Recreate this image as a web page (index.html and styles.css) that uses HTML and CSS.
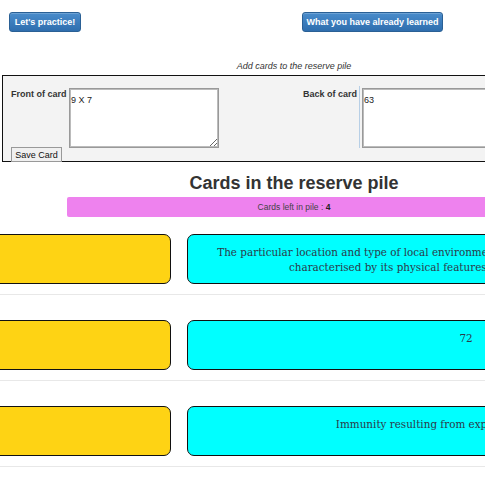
FILE: index.html
```html
<!DOCTYPE html>
<html>
<head>
<meta charset="utf-8">
<link rel="stylesheet" href="styles.css">
</head>
<body>
<div class="page">
  <div class="topbar">
    <button class="btn btn-practice">Let's practice!</button>
    <button class="btn btn-learned">What you have already learned</button>
  </div>
  <div class="caption">Add cards to the reserve pile</div>
  <div class="addform">
    <div class="fields">
      <label class="lbl lbl-front">Front of card</label>
      <textarea class="ta ta-front">9 X 7</textarea>
      <label class="lbl lbl-back">Back of card</label>
      <div class="backwrap"><textarea class="ta ta-back">63</textarea></div>
    </div>
    <button class="save">Save Card</button>
  </div>
  <h2 class="title">Cards in the reserve pile</h2>
  <div class="count">Cards left in pile : <b>4</b></div>
  <div class="rows">
    <div class="row">
      <div class="card front"></div>
      <div class="card back">The particular location and type of local environment inhabited by an organism or community,<br>characterised by its physical features or by its dominant producers</div>
    </div>
    <div class="row">
      <div class="card front"></div>
      <div class="card back">72</div>
    </div>
    <div class="row">
      <div class="card front"></div>
      <div class="card back">Immunity resulting from exposure to an infection</div>
    </div>
  </div>
</div>
</body>
</html>
```

FILE: styles.css
```css
html, body {
  margin: 0;
  padding: 0;
  background: #fff;
  overflow: hidden;
}
body {
  font-family: "Liberation Sans", Arial, sans-serif;
  color: #333;
  width: 485px;
  height: 485px;
}
.page {
  width: 800px;
}
.topbar {
  display: flex;
  padding: 12px 0 0 9px;
  height: 20px;
}
.btn {
  height: 20px;
  padding: 0;
  white-space: nowrap;
  border: 1px solid #2a6095;
  border-radius: 3px;
  background: linear-gradient(#4a8ccb, #2f6eae);
  color: #fff;
  font-family: "Liberation Sans", Arial, sans-serif;
  font-weight: bold;
  font-size: 9px;
  box-shadow: inset 0 1px 0 rgba(255,255,255,0.2);
}
.btn-practice {
  width: 72px;
}
.btn-learned {
  width: 141px;
  margin-left: 221px;
}
.caption {
  width: 588px;
  text-align: center;
  font-style: italic;
  font-size: 9px;
  margin-top: 28px;
  height: 13px;
  line-height: 13px;
}
.addform {
  margin: 2px 0 0 2px;
  width: 600px;
  height: 85px;
  border: 1px solid #111;
  background: #f3f3f3;
  box-sizing: content-box;
}
.fields {
  display: flex;
  align-items: flex-start;
  padding: 12px 0 0 8px;
}
.lbl {
  font-size: 9px;
  font-weight: bold;
  color: #333;
  padding-top: 1px;
}
.lbl-front {
  width: 58px;
}
.ta {
  display: block;
  width: 150px;
  height: 60px;
  box-sizing: border-box;
  border: 1px solid #999;
  box-shadow: inset 0 0 0 1px #bbb;
  background: #fff;
  font-family: "Liberation Sans", Arial, sans-serif;
  font-size: 9px;
  padding: 6px 1px 0 1px;
  margin: 0;
  resize: both;
  color: #222;
}
.lbl-back {
  padding-left: 84px;
  box-sizing: border-box;
  width: 140px;
}
.backwrap {
  border-left: 1px solid #b7cfe6;
  padding: 2px 0 0 2px;
  margin-top: -2px;
}
.ta-back {
  width: 200px;
}
.save {
  display: block;
  margin: -1px 0 0 8px;
  height: 15px;
  width: 51px;
  padding: 0;
  font-family: "Liberation Sans", Arial, sans-serif;
  font-size: 9px;
  color: #111;
  background: #f0f0f0;
  border: 1px solid #999;
  border-radius: 0;
}
.title {
  width: 588px;
  text-align: center;
  margin: 9px 0 0 0;
  font-size: 18px;
  line-height: 24px;
  font-weight: bold;
  color: #333;
}
.count {
  margin: 2px 0 0 67px;
  width: 454px;
  height: 20px;
  line-height: 20px;
  background: #ee82ee;
  border-radius: 2px;
  text-align: center;
  font-size: 8.5px;
  color: #444;
}
.count b {
  color: #222;
}
.rows {
  margin-top: 17px;
}
.row {
  display: flex;
  gap: 16px;
  padding-bottom: 10px;
  border-bottom: 1px solid #e8e8e8;
  margin-bottom: 25px;
  margin-left: -20px;
}
.card {
  height: 50px;
  box-sizing: border-box;
  border: 1px solid #111;
  border-radius: 7px;
}
.front {
  width: 191px;
  flex: none;
  background: #fed314;
}
.back {
  width: 558px;
  flex: none;
  background: #00ffff;
  text-align: center;
  font-family: "DejaVu Serif", serif;
  font-size: 10.4px;
  line-height: 15px;
  padding-top: 10px;
  color: #2b3a4a;
  white-space: nowrap;
}
```
